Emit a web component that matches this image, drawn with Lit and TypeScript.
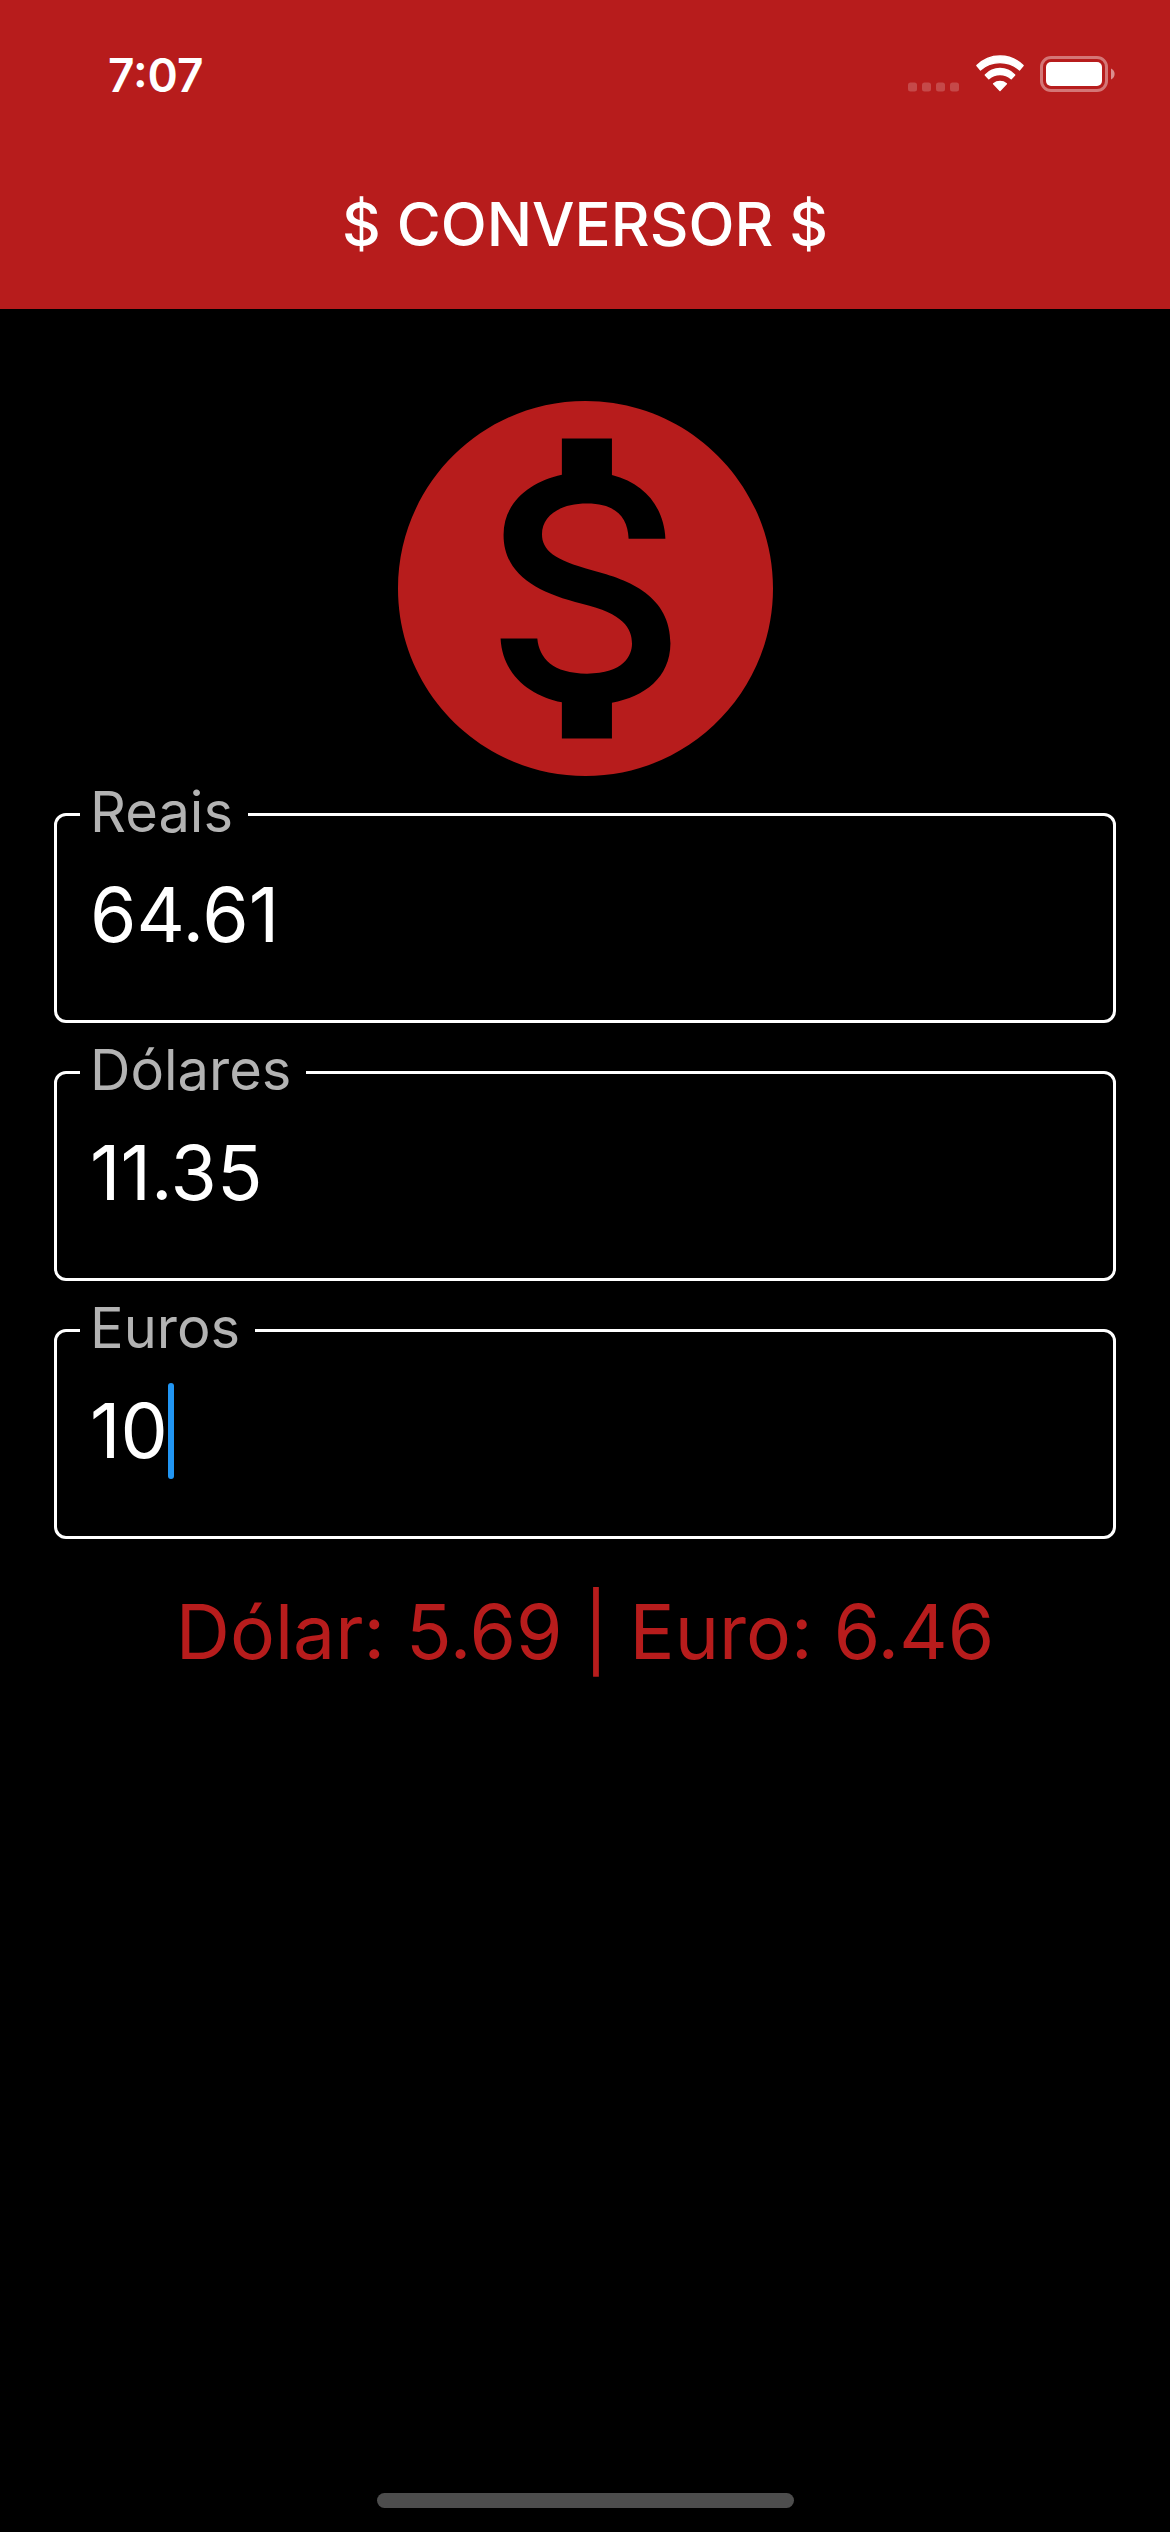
import { LitElement, html, css, svg } from "lit";
import { customElement, state } from "lit/decorators.js";
import { classMap } from "lit/directives/class-map.js";

type Currency = "real" | "dollar" | "euro";

const RATES: Record<Currency, number> = { real: 1, dollar: 5.69, euro: 6.46 };

const FIELDS: { id: Currency; label: string }[] = [
  { id: "real", label: "Reais" },
  { id: "dollar", label: "Dólares" },
  { id: "euro", label: "Euros" },
];

@customElement("status-bar")
export class StatusBar extends LitElement {
  static styles = css`
    :host {
      display: flex;
      align-items: flex-end;
      justify-content: space-between;
      padding: 46px 54px 0 108px;
    }
    .time {
      font-size: 46px;
      line-height: 58px;
      font-weight: 600;
    }
    .icons {
      display: flex;
      align-items: flex-end;
      gap: 16px;
      padding-bottom: 12px;
    }
    .icon {
      display: block;
    }
  `;

  render() {
    return html`
      <span class="time">7:07</span>
      <div class="icons">
        <svg class="icon" width="52" height="10" viewBox="0 0 52 10" aria-hidden="true">
          ${[0, 14, 28, 42].map(
            (x) => svg`<rect x=${x} y="0.5" width="9" height="9" rx="2.5" fill="#fff" fill-opacity="0.2" />`,
          )}
        </svg>
        <svg class="icon" width="48" height="37" viewBox="0 0 48 37" aria-hidden="true">
          <g fill="#fff" stroke="#fff" stroke-width="1.4" stroke-linejoin="round">
            <path d="M0.9 10.6A32.5 32.5 0 0 1 47.1 10.6L43.6 14.9A30 30 0 0 0 4.4 14.9Z" />
            <path d="M9.3 20A20 20 0 0 1 38.7 20L35.2 23.8A16.7 16.7 0 0 0 12.8 23.8Z" />
            <path d="M17.6 28.8A10 10 0 0 1 30.4 28.8L24 35.4Z" />
          </g>
        </svg>
        <svg class="icon" width="76" height="36" viewBox="0 0 76 36" aria-hidden="true">
          <rect x="1.5" y="1.5" width="65" height="33" rx="9.5" fill="none" stroke="#fff" stroke-opacity="0.4" stroke-width="3" />
          <rect x="6" y="6" width="56" height="24" rx="5" fill="#fff" />
          <path d="M71 12.5a6 6 0 0 1 0 11z" fill="#fff" fill-opacity="0.5" />
        </svg>
      </div>
    `;
  }
}

@customElement("app-root")
export class AppRoot extends LitElement {
  static styles = css`
    :host {
      display: flex;
      flex-direction: column;
      min-height: 100vh;
      background: #000;
      color: #fff;
      font-family: Inter, Roboto, "Liberation Sans", sans-serif;
    }
    .header {
      background: #b71c1c;
    }
    .title {
      margin: 0;
      padding: 82px 0 47px;
      text-align: center;
      font-size: 60px;
      line-height: 76px;
      font-weight: 500;
    }
    .content {
      flex: 1;
      display: flex;
      flex-direction: column;
      padding: 92px 54px 0;
    }
    .logo {
      display: block;
      align-self: center;
      width: 375px;
      height: 375px;
      fill: #b71c1c;
    }
    .form {
      display: flex;
      flex-direction: column;
      gap: 17px;
      padding-top: 6px;
    }
    .field {
      margin: 0;
      min-width: 0;
      padding: 20px 23px 57px;
      border: 3px solid #fff;
      border-radius: 12px;
    }
    .legend {
      padding: 0 15px 5px 10px;
      color: #b3b3b3;
      font-size: 56px;
      line-height: 60px;
    }
    .legend label {
      display: block;
    }
    .entry {
      display: flex;
      padding: 0 10px;
    }
    .input {
      flex: 1;
      min-width: 0;
      height: 96px;
      margin: 0;
      padding: 0;
      border: 0;
      outline: 0;
      background: transparent;
      color: inherit;
      caret-color: transparent;
      font: inherit;
      font-size: 75px;
      line-height: 96px;
    }
    .active .input {
      flex: none;
      field-sizing: content;
      max-width: 100%;
    }
    .caret {
      width: 6px;
      height: 96px;
      border-radius: 3px;
      background: #2196f3;
    }
    .rates {
      margin: 45px 0 0;
      text-align: center;
      color: #b71c1c;
      font-size: 75px;
      line-height: 96px;
    }
    .home {
      align-self: center;
      width: 417px;
      height: 15px;
      margin-bottom: 24px;
      border-radius: 8px;
      background: #4d4d4d;
    }
  `;

  @state() private active: Currency = "euro";
  @state() private values: Record<Currency, string> = {
    real: "64.61",
    dollar: "11.35",
    euro: "10",
  };

  private convert(from: Currency, text: string) {
    const amount = parseFloat(text);
    const next = { ...this.values, [from]: text };
    for (const { id } of FIELDS) {
      if (id === from) continue;
      next[id] = Number.isNaN(amount) ? "" : ((amount * RATES[from]) / RATES[id]).toFixed(2);
    }
    this.values = next;
  }

  private renderField({ id, label }: { id: Currency; label: string }) {
    const active = this.active === id;
    return html`
      <fieldset class=${classMap({ field: true, active })}>
        <legend class="legend"><label for=${id}>${label}</label></legend>
        <div class="entry">
          <input
            class="input"
            id=${id}
            type="text"
            inputmode="decimal"
            autocomplete="off"
            .value=${this.values[id]}
            @focus=${() => (this.active = id)}
            @input=${(e: Event) => this.convert(id, (e.target as HTMLInputElement).value)}
          />
          ${active ? html`<span class="caret"></span>` : null}
        </div>
      </fieldset>
    `;
  }

  render() {
    return html`
      <header class="header">
        <status-bar></status-bar>
        <h1 class="title">$ CONVERSOR $</h1>
      </header>
      <main class="content">
        <svg class="logo" viewBox="2 2 20 20" aria-hidden="true">
          <path
            d="M12 2C6.48 2 2 6.48 2 12s4.48 10 10 10 10-4.48 10-10S17.52 2 12 2zm1.41 16.09V20h-2.67v-1.93c-1.71-.36-3.16-1.46-3.27-3.4h1.96c.1 1.05.82 1.87 2.65 1.87 1.96 0 2.4-.98 2.4-1.59 0-.83-.44-1.61-2.67-2.14-2.48-.6-4.18-1.62-4.18-3.67 0-1.72 1.39-2.84 3.11-3.21V4h2.67v1.95c1.86.45 2.79 1.86 2.85 3.39H14.3c-.05-1.11-.64-1.87-2.22-1.87-1.5 0-2.4.68-2.4 1.64 0 .84.65 1.39 2.67 1.91s4.18 1.39 4.18 3.91c-.02 1.83-1.38 2.83-3.12 3.16z"
          />
        </svg>
        <form class="form" @submit=${(e: Event) => e.preventDefault()}>
          ${FIELDS.map((field) => this.renderField(field))}
        </form>
        <p class="rates">Dólar: ${RATES.dollar} | Euro: ${RATES.euro}</p>
      </main>
      <div class="home"></div>
    `;
  }
}
